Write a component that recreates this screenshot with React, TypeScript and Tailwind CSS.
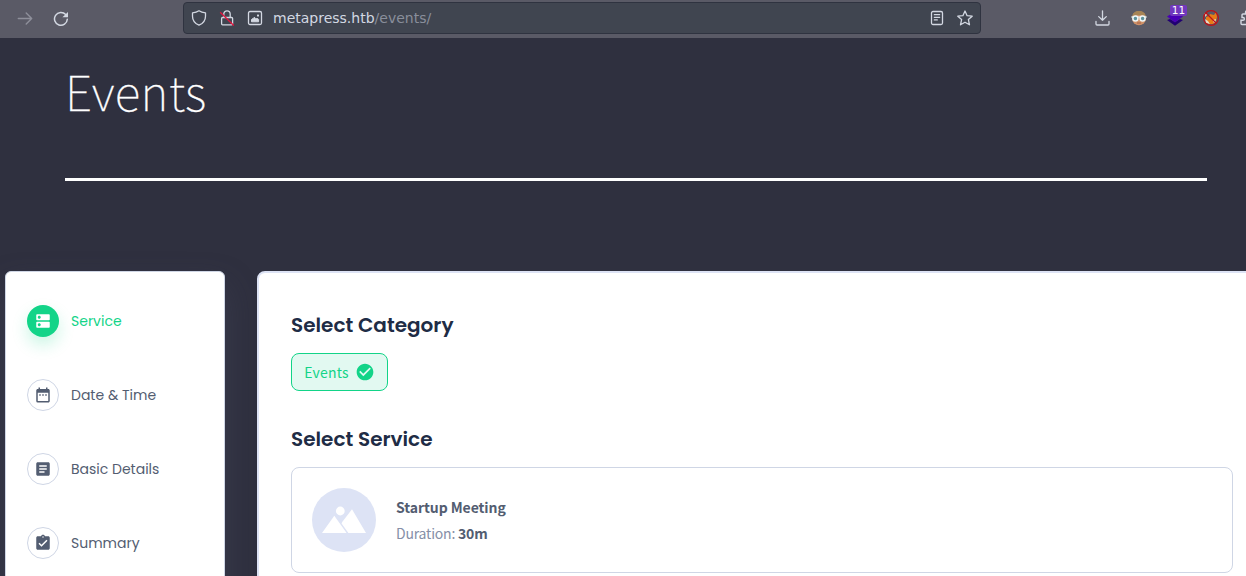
import React from "react";
import {
  MdDns,
  MdDateRange,
  MdArticle,
  MdAssignmentTurnedIn,
  MdCheckCircle,
} from "react-icons/md";

function BrowserBar() {
  return (
    <header className="relative flex h-[38px] w-full shrink-0 items-start overflow-hidden bg-[#5a5a66] font-['DejaVu_Sans',sans-serif] text-[#d3d8e2]">
      <div className="flex h-9 w-[183px] shrink-0 items-center pt-0.5 pl-[17px]">
        <svg className="size-4 text-[#8e8f9a]" viewBox="0 0 16 16" fill="none" stroke="currentColor" strokeWidth="1.4" strokeLinecap="round" strokeLinejoin="round">
          <path d="M1.3 7.500h13.4M9.2 2 14.7 7.500l-5.500 5.500" />
        </svg>
        <svg className="ml-5 size-4" viewBox="0 0 16 16" fill="none">
          <path d="M12.7 3.6A6.4 6.4 0 1 0 14.3 8.2" stroke="currentColor" strokeWidth="1.5" strokeLinecap="round" />
          <path d="M15 1v5.2H9.4z" fill="currentColor" />
        </svg>
      </div>
      <div className="mt-0.5 flex h-8 w-[798px] shrink-0 items-center rounded-[4px] border border-[#2f3340] bg-[#404550] pl-[7px]">
        <svg className="size-4" viewBox="0 0 16 16" fill="none" stroke="currentColor" strokeWidth="1.3" strokeLinejoin="round">
          <path d="M8 .8c1.800 1.300 4 1.900 6.500 2v3.400c0 4-2.300 7.200-6.500 9-4.200-1.800-6.500-5-6.500-9V2.800C4 2.700 6.200 2.100 8 .8z" />
        </svg>
        <svg className="ml-3 size-4" viewBox="0 0 16 16" fill="none" stroke="currentColor" strokeWidth="1.3">
          <rect x="2.600" y="7.500" width="11" height="7.300" rx="1" />
          <path d="M4.800 7.500V4a3.200 3.200 0 0 1 6.400 0v3.500" />
          <path d="M1.200 2.300 14.800 15.500" stroke="#e3143e" />
        </svg>
        <svg className="ml-3 size-4" viewBox="0 0 16 16" fill="none">
          <rect x="1.500" y="1.500" width="13" height="13" rx="1.500" stroke="currentColor" strokeWidth="1.300" />
          <path d="M4.500 11.800V9.500l.8-.8h1l1-1.500 1.500 1.500h2.200l.6.800v2.300z" fill="currentColor" stroke="currentColor" strokeLinejoin="round" />
          <rect x="10" y="4.500" width="2" height="2" rx=".6" fill="currentColor" />
        </svg>
        <div className="ml-[10px] grow text-[14px] leading-5">
          metapress.htb<span className="text-[#898e9b]">/events/</span>
        </div>
        <svg className="size-4" viewBox="0 0 16 16" fill="none" stroke="currentColor" strokeWidth="1.300" strokeLinecap="round">
          <rect x="2.500" y="1.500" width="11" height="13" rx="1.500" />
          <path d="M5.300 4.700h5.400M5.300 7.300h5.400M5.300 9.900h3" strokeWidth="1.200" />
        </svg>
        <svg className="mr-[7px] ml-3 size-4" viewBox="0 0 16 16" fill="none" stroke="currentColor" strokeWidth="1.300" strokeLinejoin="round">
          <path d="m8 1 2.100 4.700 5.100.5-3.800 3.400 1.100 5.200L8 12.200l-4.500 2.600 1.100-5.200L.8 6.200l5.100-.5z" />
        </svg>
      </div>
      <div className="ml-[114px] flex h-9 shrink-0 items-center gap-5">
        <svg className="size-4" viewBox="0 0 16 16" fill="none" stroke="currentColor" strokeWidth="1.300" strokeLinecap="round" strokeLinejoin="round">
          <path d="M7.500.8v9.500M3.700 6.600l3.800 3.700 3.800-3.700M1 11.500V14c0 .6.400 1 1 1h11c.6 0 1-.4 1-1v-2.500" />
        </svg>
        <svg className="size-4" viewBox="0 0 16 16">
          <circle cx="8" cy="8.300" r="7" fill="#cf9168" />
          <path d="M1.200 7C1.500 2.800 4 1.100 8 1.100s6.500 1.700 6.800 5.900L11 5H5z" fill="#a68455" />
          <path d="M.3 7h15.400" stroke="#dce9ed" strokeWidth="1.300" />
          <circle cx="4.400" cy="8.500" r="2.500" fill="#5e919b" stroke="#edf6f7" strokeWidth="1.500" />
          <circle cx="11.600" cy="8.500" r="2.500" fill="#5e919b" stroke="#edf6f7" strokeWidth="1.500" />
          <path d="M6 13h4" stroke="#a65e45" />
        </svg>
        <div className="relative size-4">
          <svg className="size-4" viewBox="0 0 16 16">
            <path d="m0 10 3-1 5 3 5-3 3 1-8 5.800z" fill="#210071" />
            <path d="m0 6.500 8-5 8 5-8 6z" fill="#4900b5" />
          </svg>
          <span className="absolute -top-[5px] left-[3px] flex h-[11px] w-[17px] items-center justify-center rounded-[2px] bg-[#7138bd] text-[10.500px] leading-none text-white">11</span>
        </div>
        <svg className="size-4" viewBox="0 0 16 16" fill="none">
          <path d="m3 7 3-1 1-2 4 1 2-3 1 5-1 4-3 3H7l-3-1-1-3z" fill="#e87b16" />
          <path d="m1.500 3 3 1-2 3zM2 9l3 2 2 3-4-1zm8 1 3-1-1 4-2-1z" fill="#e9d8c8" />
          <circle cx="8" cy="8" r="7.400" stroke="#bd1118" strokeWidth="1.200" />
          <path d="m3 3 10 10" stroke="#bd1118" strokeWidth="1.300" />
        </svg>
        <svg className="size-4" viewBox="0 0 16 16" fill="none" stroke="currentColor" strokeWidth="1.400">
          <path d="M6.500 4H4a1 1 0 0 0-1 1v2.500h1a1.400 1.400 0 0 1 0 2.800H2v3.200a1 1 0 0 0 1 1h10V4h-3V2.500a1.700 1.700 0 0 0-3.500 0z" />
        </svg>
      </div>
    </header>
  );
}

const steps = [
  { label: "Service", icon: MdDns, active: true },
  { label: "Date & Time", icon: MdDateRange, active: false },
  { label: "Basic Details", icon: MdArticle, active: false },
  { label: "Summary", icon: MdAssignmentTurnedIn, active: false },
];

function Sidebar() {
  return (
    <nav className="h-[340px] w-[220px] shrink-0 rounded-[6px] border border-[#cfd6e5] bg-white pt-[33px] pl-[21px] shadow-[0_16px_32px_rgba(73,75,98,0.400)]">
      <ul className="flex flex-col gap-[42px]">
        {steps.map(({ label, icon: Icon, active }) => (
          <li key={label} className="flex h-8 items-center gap-3">
            <span className={active ? "flex size-8 items-center justify-center rounded-full bg-[#12d488] text-white shadow-[0_8px_16px_rgba(18,212,136,0.220)]" : "flex size-8 items-center justify-center rounded-full border border-[#cfd6e5] text-[#535d71]"}>
              <Icon className="size-[18px]" />
            </span>
            <span className={`${active ? "text-[#12d488]" : "text-[#535d71]"} font-[Poppins,Inter,sans-serif] text-[14px] leading-5 whitespace-nowrap`}>{label}</span>
          </li>
        ))}
      </ul>
    </nav>
  );
}

function ServiceCard() {
  return (
    <article className="mt-[13px] flex h-[106px] w-[942px] shrink-0 items-center rounded-[8px] border border-[#cfd6e5] pl-5">
      <svg className="size-16 shrink-0" viewBox="0 0 64 64">
        <circle cx="32" cy="32" r="32" fill="#dde3f5" />
        <circle cx="28.300" cy="23" r="4.400" fill="#fff" />
        <path d="m10 45 12.300-17.200L34.600 45zM30.200 34 40 21.300 54 45H36.300l-6.800-9.500z" fill="#fff" />
        <path d="m28.800 35.200 7 9.800" stroke="#dde3f5" strokeWidth=".4" />
      </svg>
      <div className="ml-5 font-['Noto_Sans_CJK_SC',sans-serif]">
        <h3 className="text-[14px] leading-6 font-bold tracking-[-0.070px] text-[#535d71]">Startup Meeting</h3>
        <p className="mt-0.5 text-[14px] leading-6 tracking-[-0.200px] text-[#858fa7]">Duration: <b className="font-bold text-[#535d71]">30m</b></p>
      </div>
    </article>
  );
}

export default function App() {
  return (
    <div className="flex h-[576px] w-full flex-col overflow-hidden bg-[#2f303f]">
      <BrowserBar />
      <div className="h-[233px] shrink-0 pt-[18px] pr-[39px] pl-[65px]">
        <h1 className="h-[122px] font-['Noto_Sans_CJK_SC',sans-serif] text-[48px] leading-[68px] font-thin tracking-[0.500px] text-white [-webkit-text-stroke:0.300px_white]">Events</h1>
        <div className="h-[3px] bg-white" />
      </div>
      <main className="flex shrink-0 gap-8 pl-[5px]">
        <Sidebar />
        <section className="flex h-[340px] w-[1040px] shrink-0 flex-col items-start rounded-[8px] border-2 border-[#dde3f5] bg-white pt-[37px] pl-8">
          <h2 className="font-[Poppins,Inter,sans-serif] text-[20px] leading-[30px] font-semibold whitespace-nowrap text-[#202c45]">Select Category</h2>
          <button className="mt-[13px] flex h-[38px] w-[97px] items-center gap-1.5 rounded-[8px] border border-[#12d488] bg-[#e2f9f1] pl-3 text-[#12d488]">
            <span className="w-[45px] font-['Noto_Sans_CJK_SC',sans-serif] text-[14px] tracking-[0.200px]">Events</span>
            <MdCheckCircle className="size-5" />
          </button>
          <h2 className="mt-[33px] font-[Poppins,Inter,sans-serif] text-[20px] leading-[30px] font-semibold whitespace-nowrap text-[#202c45]">Select Service</h2>
          <ServiceCard />
        </section>
      </main>
    </div>
  );
}
